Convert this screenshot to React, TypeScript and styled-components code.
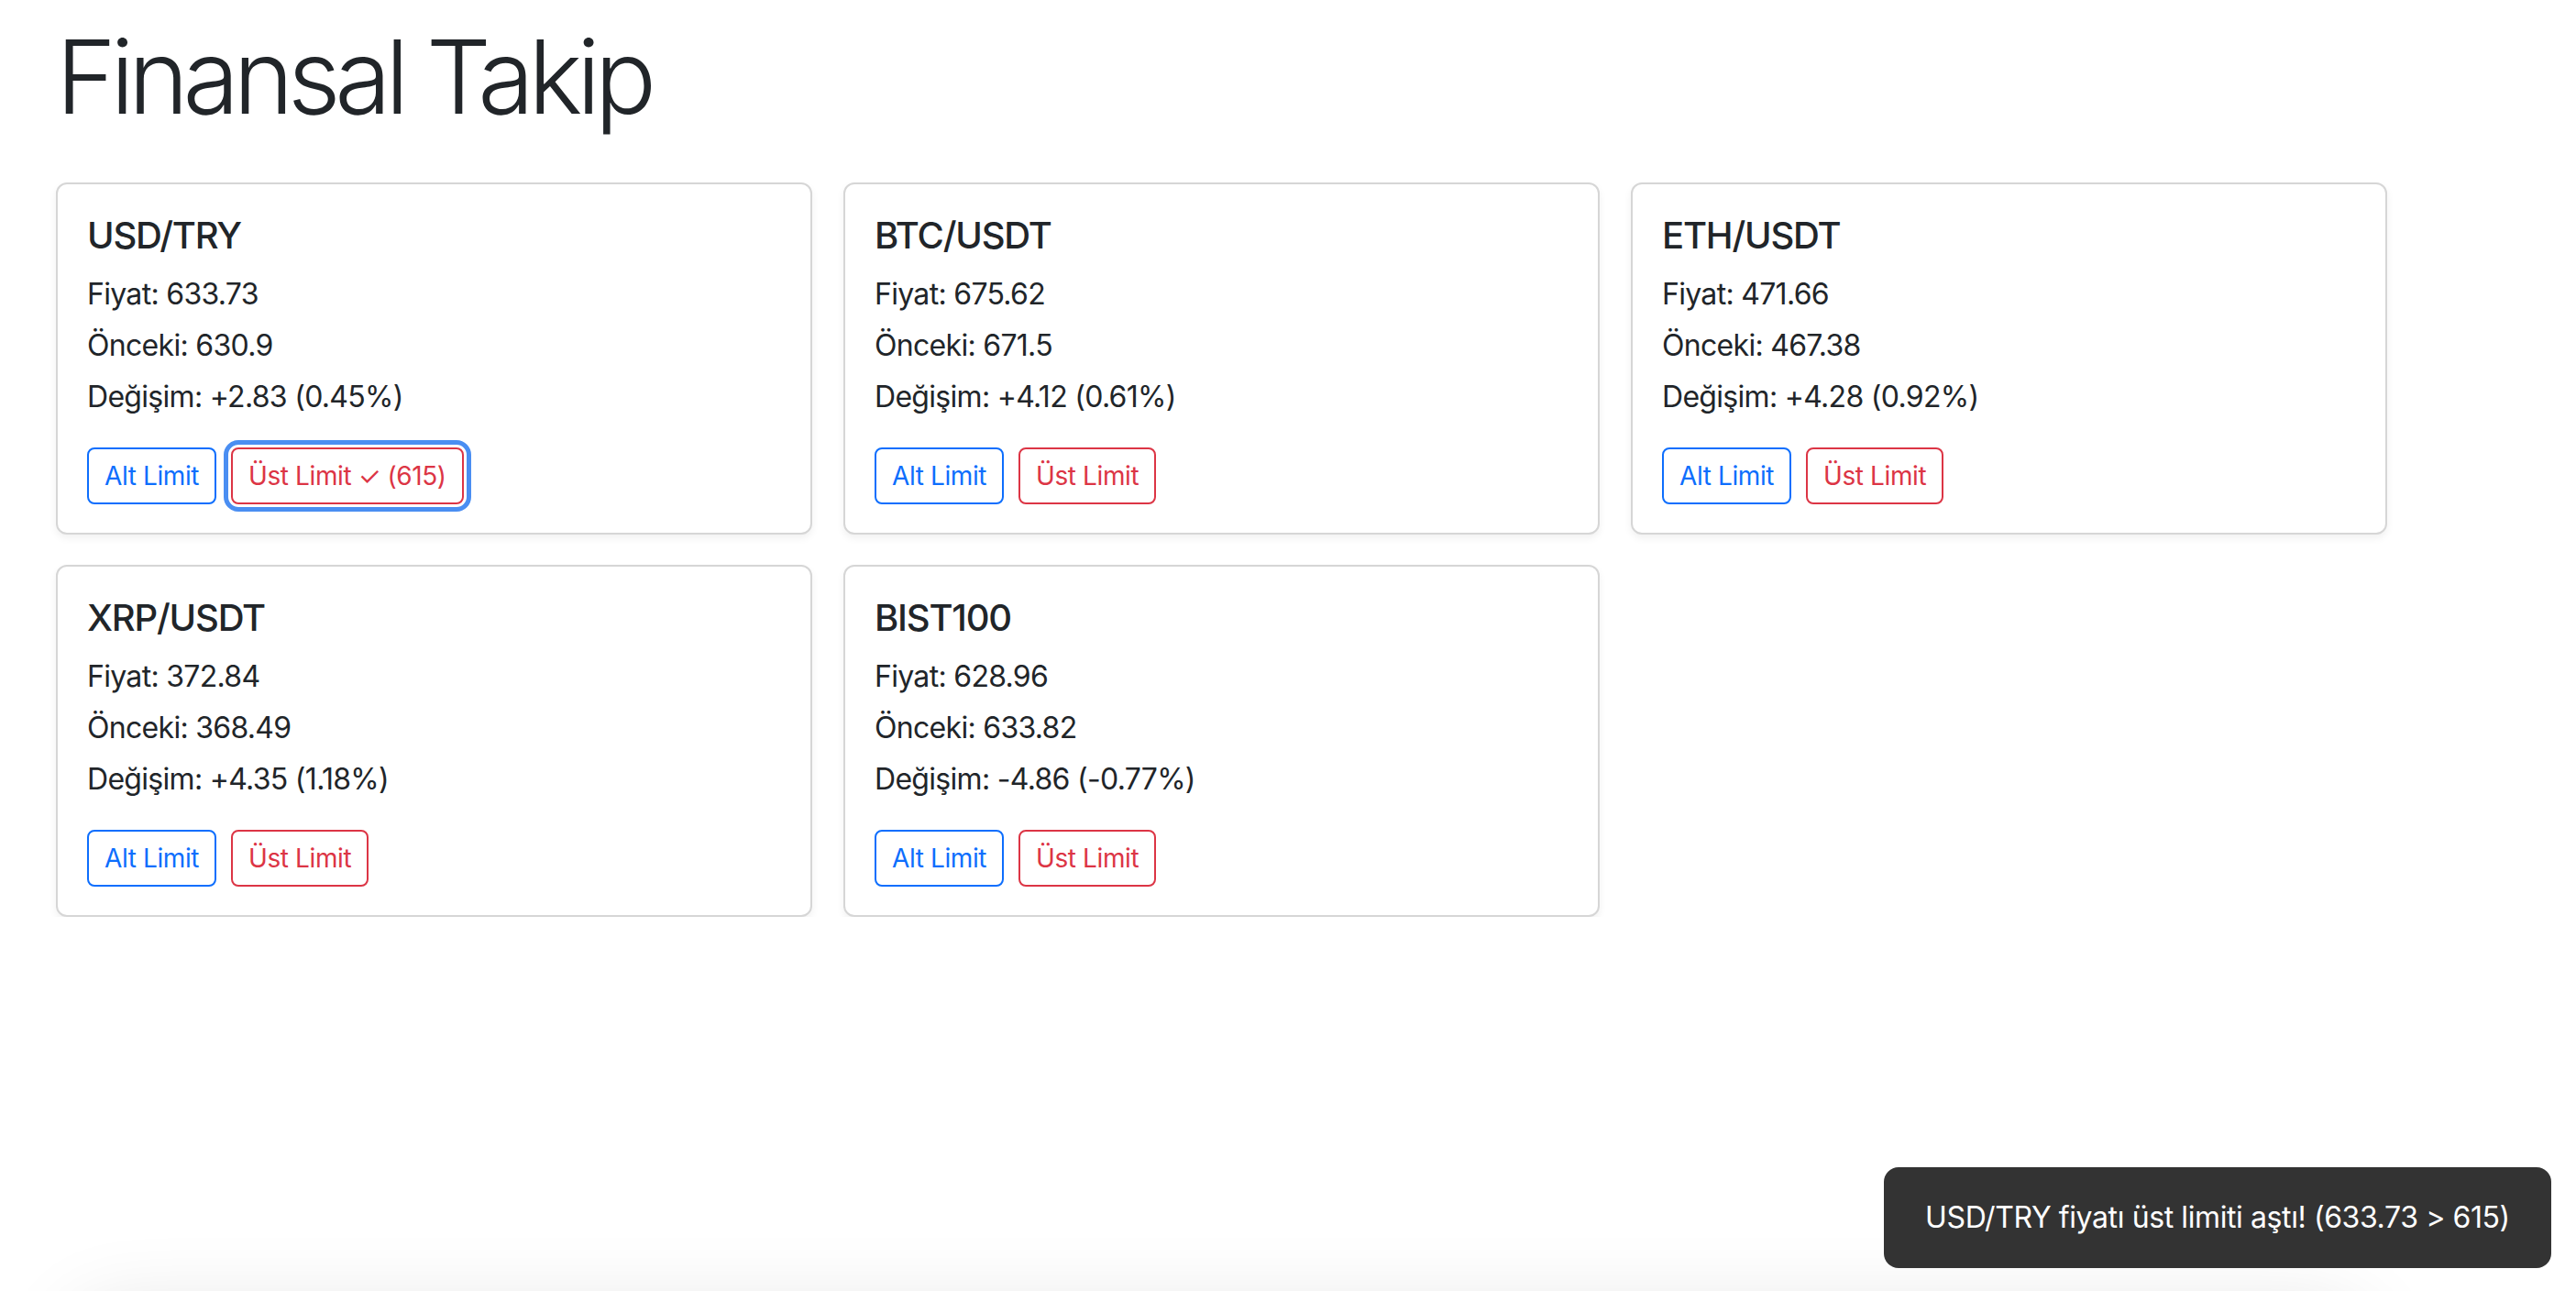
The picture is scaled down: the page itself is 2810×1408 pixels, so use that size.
import styled, { createGlobalStyle } from "styled-components";

type Pair = {
  name: string;
  price: string;
  prev: string;
  change: string;
  upperSet?: string;
};

const pairs: Pair[] = [
  { name: "USD/TRY", price: "633.73", prev: "630.9", change: "+2.83 (0.45%)", upperSet: "615" },
  { name: "BTC/USDT", price: "675.62", prev: "671.5", change: "+4.12 (0.61%)" },
  { name: "ETH/USDT", price: "471.66", prev: "467.38", change: "+4.28 (0.92%)" },
  { name: "XRP/USDT", price: "372.84", prev: "368.49", change: "+4.35 (1.18%)" },
  { name: "BIST100", price: "628.96", prev: "633.82", change: "-4.86 (-0.77%)" },
];

const GlobalStyle = createGlobalStyle`
  html, body {
    margin: 0;
    padding: 0;
    background: #fff;
  }
  body {
    font-family: Inter, "Liberation Sans", sans-serif;
    color: #212529;
    overflow: hidden;
  }
`;

const App = () => {
  return (
    <>
      <GlobalStyle />
      <StyledWrapper>
        <Title>Finansal Takip</Title>
        <CardGrid>
          {pairs.map((p) => (
            <Card key={p.name}>
              <CardTitle>{p.name}</CardTitle>
              <Line>Fiyat: {p.price}</Line>
              <Line>Önceki: {p.prev}</Line>
              <Line>Değişim: {p.change}</Line>
              <Actions>
                <LimitButton $tone="blue">Alt Limit</LimitButton>
                <LimitButton $tone="red" $focused={!!p.upperSet}>
                  {p.upperSet ? `Üst Limit ✓ (${p.upperSet})` : "Üst Limit"}
                </LimitButton>
              </Actions>
            </Card>
          ))}
        </CardGrid>
      </StyledWrapper>
      <BottomShade />
      <Toast>USD/TRY fiyatı üst limiti aştı! (633.73 &gt; 615)</Toast>
    </>
  );
};

const StyledWrapper = styled.main`
  padding: 16px 61px 0;
`;

const Title = styled.h1`
  margin: 0 0 49px;
  font-size: 112px;
  font-weight: 300;
  line-height: 1.2;
  letter-spacing: -6.5px;
`;

const CardGrid = styled.div`
  display: grid;
  grid-template-columns: repeat(3, 825px);
  gap: 33px 34px;
`;

const Card = styled.section`
  border: 2px solid #d6d6d6;
  border-radius: 12px;
  padding: 32px 32px 31px;
  box-shadow: 0 4px 8px rgba(0, 0, 0, 0.06);
  background: #fff;
`;

const CardTitle = styled.h5`
  margin: 0 0 16px;
  font-size: 40px;
  font-weight: 500;
  line-height: 1.2;
  letter-spacing: -1.2px;
`;

const Line = styled.p`
  margin: 0 0 8px;
  font-size: 32px;
  line-height: 1.5;
  letter-spacing: -0.7px;
`;

const Actions = styled.div`
  display: flex;
  gap: 16px;
  margin-top: 31px;
`;

const LimitButton = styled.button<{ $tone: "blue" | "red"; $focused?: boolean }>`
  font-family: inherit;
  font-size: 28px;
  line-height: 1.5;
  letter-spacing: -0.4px;
  padding: 8px 17px;
  background: #fff;
  border: 2px solid ${(p) => (p.$tone === "blue" ? "#0d6efd" : "#dc3545")};
  color: ${(p) => (p.$tone === "blue" ? "#0d6efd" : "#dc3545")};
  border-radius: 8px;
  cursor: pointer;
  outline: ${(p) => (p.$focused ? "5px solid #4a8ef2" : "none")};
  outline-offset: 3px;
`;

const BottomShade = styled.div`
  position: fixed;
  left: 80px;
  width: 2500px;
  top: 1430px;
  height: 200px;
  border-radius: 40px;
  box-shadow: 0 0 90px rgba(0, 0, 0, 0.12);
`;

const Toast = styled.div`
  position: fixed;
  right: 27px;
  bottom: 25px;
  width: 728px;
  box-sizing: border-box;
  padding: 31px 0;
  text-align: center;
  background: #333;
  color: #fff;
  border-radius: 16px;
  font-size: 32px;
  line-height: 48px;
  letter-spacing: -0.4px;
`;

export default App;
